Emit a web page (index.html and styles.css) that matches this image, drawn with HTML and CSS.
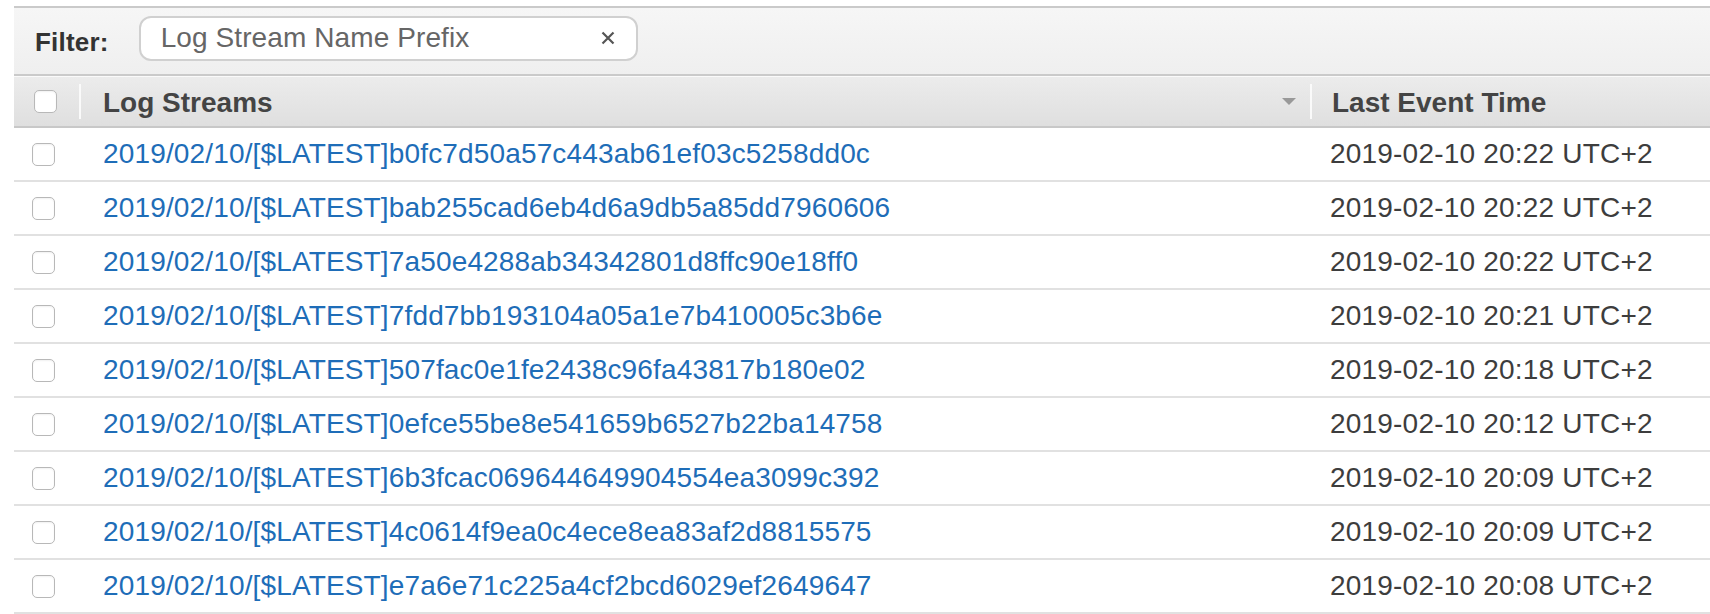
FILE: index.html
```html
<!DOCTYPE html>
<html lang="en">

<head>
  <meta charset="UTF-8">
  <meta name="viewport" content="width=device-width, initial-scale=1.0">
  <title>Log Streams</title>
  <link rel="stylesheet" href="styles.css">
</head>

<body>
  <div class="panel">
    <div class="filter-bar">
      <span class="filter-label">Filter:</span>
      <div class="search">
        <span class="placeholder">Log Stream Name Prefix</span>
        <svg class="clear" width="14" height="14" viewBox="0 0 14 14">
          <path d="M1.5 1.5 L12.5 12.5 M12.5 1.5 L1.5 12.5" stroke="#555" stroke-width="2.2" fill="none" />
        </svg>
      </div>
    </div>

    <table class="streams">
      <colgroup>
        <col class="col-check">
        <col class="col-name">
        <col class="col-time">
      </colgroup>
      <thead>
        <tr>
          <th class="check-cell head-check"><span class="checkbox"></span></th>
          <th>
            <div class="th-inner">
              <span>Log Streams</span>
              <span class="sort-arrow"></span>
            </div>
          </th>
          <th>
            <div class="th-inner time-head">Last Event Time</div>
          </th>
        </tr>
      </thead>
      <tbody>
        <tr>
          <td class="check-cell"><span class="checkbox"></span></td>
          <td><a href="#">2019/02/10/[$LATEST]b0fc7d50a57c443ab61ef03c5258dd0c</a></td>
          <td class="time">2019-02-10 20:22 UTC+2</td>
        </tr>
        <tr>
          <td class="check-cell"><span class="checkbox"></span></td>
          <td><a href="#">2019/02/10/[$LATEST]bab255cad6eb4d6a9db5a85dd7960606</a></td>
          <td class="time">2019-02-10 20:22 UTC+2</td>
        </tr>
        <tr>
          <td class="check-cell"><span class="checkbox"></span></td>
          <td><a href="#">2019/02/10/[$LATEST]7a50e4288ab34342801d8ffc90e18ff0</a></td>
          <td class="time">2019-02-10 20:22 UTC+2</td>
        </tr>
        <tr>
          <td class="check-cell"><span class="checkbox"></span></td>
          <td><a href="#">2019/02/10/[$LATEST]7fdd7bb193104a05a1e7b410005c3b6e</a></td>
          <td class="time">2019-02-10 20:21 UTC+2</td>
        </tr>
        <tr>
          <td class="check-cell"><span class="checkbox"></span></td>
          <td><a href="#">2019/02/10/[$LATEST]507fac0e1fe2438c96fa43817b180e02</a></td>
          <td class="time">2019-02-10 20:18 UTC+2</td>
        </tr>
        <tr>
          <td class="check-cell"><span class="checkbox"></span></td>
          <td><a href="#">2019/02/10/[$LATEST]0efce55be8e541659b6527b22ba14758</a></td>
          <td class="time">2019-02-10 20:12 UTC+2</td>
        </tr>
        <tr>
          <td class="check-cell"><span class="checkbox"></span></td>
          <td><a href="#">2019/02/10/[$LATEST]6b3fcac069644649904554ea3099c392</a></td>
          <td class="time">2019-02-10 20:09 UTC+2</td>
        </tr>
        <tr>
          <td class="check-cell"><span class="checkbox"></span></td>
          <td><a href="#">2019/02/10/[$LATEST]4c0614f9ea0c4ece8ea83af2d8815575</a></td>
          <td class="time">2019-02-10 20:09 UTC+2</td>
        </tr>
        <tr>
          <td class="check-cell"><span class="checkbox"></span></td>
          <td><a href="#">2019/02/10/[$LATEST]e7a6e71c225a4cf2bcd6029ef2649647</a></td>
          <td class="time">2019-02-10 20:08 UTC+2</td>
        </tr>
      </tbody>
    </table>
  </div>
</body>

</html>
```

FILE: styles.css
```css
html,
body {
  margin: 0;
  padding: 0;
  background: #fff;
  overflow: hidden;
}

body {
  font-family: "Liberation Sans", Arial, Helvetica, sans-serif;
  color: #444;
}

.panel {
  margin: 6px 0 0 14px;
}

/* filter bar */
.filter-bar {
  display: flex;
  align-items: center;
  height: 66px;
  padding-left: 21px;
  border-top: 2px solid #cacaca;
  border-bottom: 2px solid #cacaca;
  background: linear-gradient(#f6f6f6, #efefef);
  box-sizing: content-box;
}

.filter-label {
  font-size: 26px;
  font-weight: bold;
  color: #333;
  margin-right: 30px;
  margin-top: 2px;
  letter-spacing: 0.2px;
}

.search {
  display: flex;
  align-items: center;
  width: 499px;
  height: 45px;
  box-sizing: border-box;
  margin-top: -6px;
  padding: 0 21px 0 20px;
  background: #fff;
  border: 2px solid #d0d0d0;
  border-radius: 12px;
}

.placeholder {
  flex: 1;
  font-size: 28px;
  color: #666;
  letter-spacing: 0.1px;
}

.clear {
  display: block;
}

/* table */
.streams {
  width: 100%;
  border-collapse: collapse;
  table-layout: fixed;
}

.col-check {
  width: 65px;
}

.col-name {
  width: 1231px;
}

.streams th {
  height: 50px;
  padding: 0;
  text-align: left;
  font-size: 28px;
  font-weight: bold;
  color: #444;
  background: linear-gradient(#ececec, #dfdfdf);
  border-bottom: 2px solid #c8c8c8;
  box-shadow: inset 0 1px 0 #fafafa;
}

.th-inner {
  display: flex;
  align-items: center;
  height: 35px;
  padding: 3px 0 0 22px;
  box-sizing: border-box;
  border-left: 2px solid #fafafa;
}

.th-inner.time-head {
  padding-left: 20px;
}

.sort-arrow {
  margin-left: auto;
  margin-right: 14px;
  margin-top: -3px;
  width: 0;
  height: 0;
  border-left: 7px solid transparent;
  border-right: 7px solid transparent;
  border-top: 7px solid #999;
}

.streams td {
  height: 52px;
  padding: 0 0 0 24px;
  font-size: 28px;
  border-bottom: 2px solid #e1e1e1;
  white-space: nowrap;
  letter-spacing: 0.15px;
}

.streams td.time {
  padding-left: 20px;
  color: #3d3d3d;
  letter-spacing: 0.2px;
}

.streams td.check-cell,
.streams th.check-cell {
  padding-left: 18px;
}

.streams th.head-check {
  padding-left: 20px;
}

.checkbox {
  display: block;
  width: 23px;
  height: 23px;
  box-sizing: border-box;
  border: 1.5px solid #b8b8b8;
  border-radius: 5px;
  background: #fff;
  box-shadow: inset 0 1px 2px rgba(0, 0, 0, 0.06);
}

.streams a {
  color: #1e6db8;
  text-decoration: none;
}
```
